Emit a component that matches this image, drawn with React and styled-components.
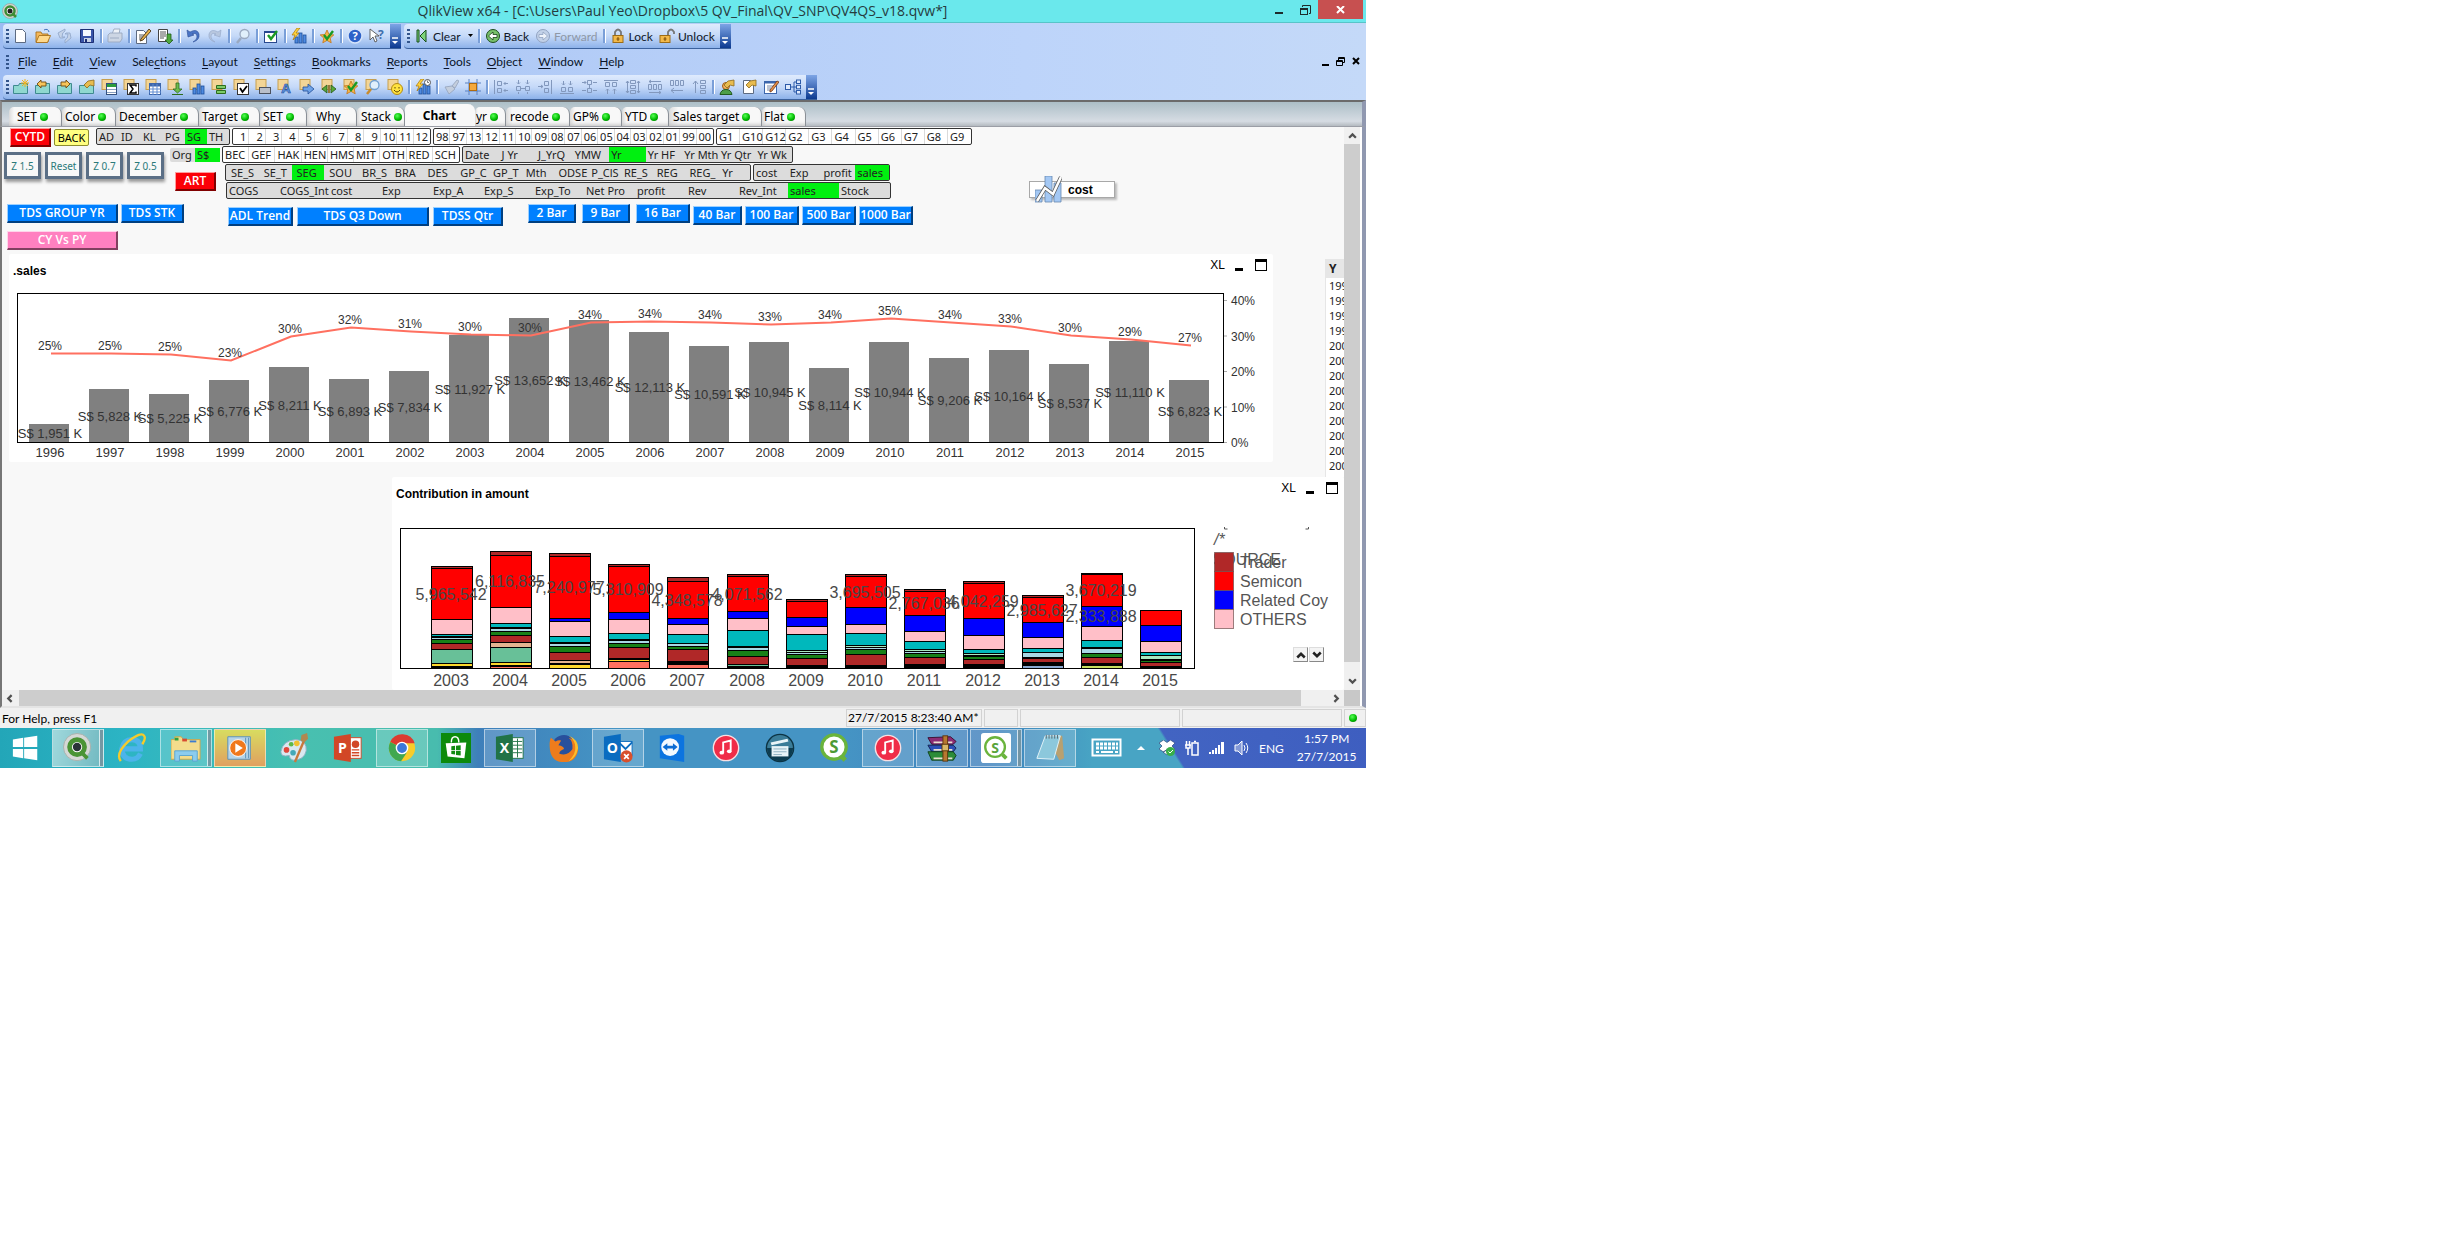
import React from "react";
import styled, { createGlobalStyle } from "styled-components";

const UI_FONT = `Lato, "Open Sans", sans-serif`;
const SHEET_FONT = `"Noto Sans", "DejaVu Sans", sans-serif`;
const CHART_FONT = `"Liberation Sans", Arial, sans-serif`;

const GlobalStyle = createGlobalStyle`
  * {
    box-sizing: border-box;
  }
  body {
    margin: 0;
    background: #fff;
    font-family: ${UI_FONT};
    font-size: 12px;
    color: #000;
  }
  button {
    font: inherit;
    color: inherit;
    padding: 0;
    border: 0;
    background: none;
  }
  svg {
    display: block;
    flex: none;
  }
`;

const Desktop = styled.div`
  width: 100%;
  max-width: 1366px;
  display: flex;
  flex-direction: column;
`;

/* ---------- window frame ---------- */

const TitleBar = styled.header`
  height: 23px;
  display: flex;
  align-items: stretch;
  background: #6ae8ec;
  border-bottom: 1px solid #58c4c8;
  padding-left: 2px;
`;

const TitleText = styled.h1`
  flex: 1;
  margin: 0;
  padding-left: 80px;
  font-family: "Open Sans", sans-serif;
  font-size: 14px;
  line-height: 22px;
  font-weight: 400;
  text-align: center;
  color: #263c3e;
  white-space: nowrap;
`;

const WindowButton = styled.button`
  width: ${(p) => (p.$close ? "45px" : "26px")};
  height: ${(p) => (p.$close ? "19px" : "22px")};
  margin-right: ${(p) => (p.$close ? "3px" : "0")};
  background: ${(p) => (p.$close ? "#c75050" : "transparent")};
  display: flex;
  align-items: center;
  justify-content: center;
`;

const ToolArea = styled.div`
  background: linear-gradient(90deg, #9dbcf2, #b4cdf7 45%, #bdd4fa 75%, #c4d9f8);
`;

const ToolRow = styled.div`
  display: flex;
  gap: 3px;
  height: 26px;
  padding: 1px 0 0 3px;
`;

const Toolbar = styled.div`
  display: flex;
  align-items: stretch;
  height: 25px;
  border-radius: 4px 0 0 4px;
  border-bottom: 1px solid #3b619c;
  background: linear-gradient(#dfebfd, #c5d9f8 50%, #8db2ea);
`;

const Grip = styled.span`
  width: 3px;
  height: 14px;
  align-self: center;
  margin: 0 1px 0 3px;
  background: repeating-linear-gradient(#33558c 0 2px, transparent 2px 4px);
`;

const ToolButton = styled.button`
  min-width: 22px;
  padding: 0 ${(p) => (p.$text ? "3px" : "0")};
  display: flex;
  align-items: center;
  justify-content: center;
  gap: 3px;
  color: ${(p) => (p.$off ? "#8f98a6" : "#101828")};
`;

const Divider = styled.span`
  width: 6px;
  padding: 5px 2px;

  &::before {
    content: "";
    display: block;
    width: 2px;
    height: 14px;
    background: #7a9fd8;
    border-right: 1px solid #fff;
  }
`;

const Overflow = styled.button`
  width: 11px;
  margin-left: 2px;
  background: linear-gradient(#7ea5e6, #0c3a90);
  display: flex;
  align-items: flex-end;
  justify-content: center;
  padding-bottom: 3px;
`;

const MenuBar = styled.nav`
  height: 25px;
  display: flex;
  align-items: center;
  gap: 8px;
  padding: 0 6px 0 3px;
`;

const MenuGroup = styled.div`
  flex: 1;
  display: flex;
  gap: 16px;
`;

const MenuLink = styled.a`
  color: #0a1428;
  text-decoration: none;

  u {
    text-underline-offset: 2px;
  }
`;

const ChildControls = styled.span`
  display: flex;
  gap: 7px;
`;

/* ---------- sheet tabs ---------- */

const TabStrip = styled.div`
  display: flex;
  align-items: flex-end;
  height: 27px;
  border-top: 2px solid #6b6b6b;
  border-left: 2px solid #8a8a8a;
  border-bottom: 1px solid #9b9ea6;
  border-right: 4px solid #9098b0;
  padding-left: 7px;
  background: linear-gradient(#acbfc7, #d6dce3 80%, #b4bac0);
`;

const Tab = styled.button`
  width: ${(p) => p.$w}px;
  height: ${(p) => (p.$active ? "22px" : "19px")};
  padding-left: ${(p) => (p.$active ? "0" : p.$pad || 3) + "px"};
  display: flex;
  align-items: center;
  justify-content: ${(p) => (p.$active ? "center" : "flex-start")};
  gap: 3px;
  border-radius: 5px 7px 0 0;
  border-right: 1px solid ${(p) => (p.$active ? "#f8f8f8" : "#8a8f96")};
  background: ${(p) => (p.$active ? "#f8f8f8" : "linear-gradient(90deg, #dcdcdc, #f8f8f8 10%)")};
  box-shadow: ${(p) => (p.$active ? "none" : "inset 0 -4px 4px -3px #bbb")};
  font-family: ${SHEET_FONT};
  font-size: 12px;
  font-weight: ${(p) => (p.$active ? 700 : 400)};
  white-space: nowrap;
`;

const Dot = styled.span`
  width: 8px;
  height: 8px;
  border-radius: 50%;
  flex: none;
  background: radial-gradient(circle at 40% 35%, #5f5, #0b0 55%, #060);
`;

/* ---------- sheet ---------- */

const SheetFrame = styled.main`
  display: flex;
  border-left: 2px solid #777;
  border-right: 4px solid #9098b0;
`;

const Sheet = styled.div`
  flex: 1;
  min-width: 0;
  overflow: hidden;
  background: #f8f8f8;
  font-family: ${SHEET_FONT};
`;

const SelectorLine = styled.div`
  display: flex;
  align-items: flex-start;
  gap: 2px;
  height: 19px;
  padding: 1px 0 0 8px;
`;

const PushButton = styled.button`
  flex: none;
  width: ${(p) => p.$w}px;
  height: 19px;
  border-style: solid;
  border-width: 1px 2px 2px 1px;
  font-family: "Open Sans", sans-serif;
  font-weight: 600;
  font-size: 12px;
  line-height: 14px;
  color: #fff;
  white-space: nowrap;
  display: flex;
  align-items: center;
  justify-content: center;
  ${(p) =>
    ({
      blue: "background: #0080ff; border-color: #9cd0ff #003f80 #003f80 #9cd0ff;",
      red: "background: #fb0007; border-color: #ff9c9c #800000 #800000 #ff9c9c;",
      pink: "background: #ff80c0; border-color: #ffd4ea #80405f #80405f #ffd4ea;",
    })[p.$tone || "blue"]}
`;

const BackButton = styled.button`
  flex: none;
  width: 35px;
  height: 17px;
  margin: 1px 5px 0 1px;
  font-size: 11px;
  line-height: 15px;
  background: #ffff80;
  border: 1px solid #8c8c30;
  border-radius: 2px;
`;

const ListBox = styled.div`
  flex: none;
  display: grid;
  grid-template-columns: repeat(${(p) => p.$cols}, 1fr);
  width: ${(p) => p.$w}px;
  height: ${(p) => (p.$plain ? "14px" : "17px")};
  background: ${(p) => (p.$gray ? "#dcdcdc" : "#fff")};
  border: ${(p) => (p.$plain ? "0" : "1px solid #333")};
  border-radius: 2px;
`;

const Cell = styled.button`
  min-width: 0;
  padding: 0 ${(p) => (p.$right ? "2px" : "0")} 0 ${(p) => p.$pad || 2}px;
  text-align: ${(p) => (p.$right ? "right" : "left")};
  font-size: 11px;
  line-height: 14px;
  white-space: nowrap;
  color: #222;
  background: ${(p) => (p.$on ? "#00f010" : "transparent")};
  border-right: ${(p) => (p.$rule ? "1px solid #dadada" : "0")};

  &:last-child {
    border-right: 0;
  }
`;

const SelectorBlock = styled.div`
  display: flex;
  align-items: flex-start;
`;

const ZoomGroup = styled.div`
  display: flex;
  gap: 4px;
  padding: 6px 0 0 2px;
`;

const ZoomButton = styled.button`
  width: 37px;
  height: 27px;
  border: 3px solid #5b6f86;
  background: #f8f8f8;
  box-shadow: 1px 3px 3px #999;
  font-size: 10px;
  color: #2b7a7a;
  white-space: nowrap;
`;

const OrgColumn = styled.div`
  display: flex;
  flex-direction: column;
  gap: 10px;
  width: 58px;
  padding: 2px 0 0 6px;

  ${PushButton} {
    margin-left: 5px;
  }
`;

const ListStack = styled.div`
  display: flex;
  flex-direction: column;
  gap: 1px;
  width: 669px;
`;

const ListRow = styled.div`
  display: flex;
  gap: 2px;
  padding-left: ${(p) => p.$indent || 0}px;
`;

const MinimizedChart = styled.button`
  margin: 35px 0 0 138px;
  width: 86px;
  height: 17px;
  display: flex;
  align-items: center;
  gap: 6px;
  padding-left: 5px;
  background: #fff;
  border: 1px solid #a8a8a8;
  box-shadow: 2px 2px 2px #bbb;
  font-family: ${CHART_FONT};
  font-weight: 700;
`;

const ButtonLine = styled.div`
  display: flex;
  align-items: flex-start;
  height: 27px;
  margin-top: 5px;
  padding-left: 5px;
`;

const ButtonGroup = styled.div`
  display: flex;
  gap: ${(p) => p.$gap || 4}px;
  margin: ${(p) => p.$drop || 0}px 0 0 ${(p) => p.$indent || 0}px;
`;

const ButtonTail = styled.div`
  padding: 0 0 4px 5px;
`;

const ChartLine = styled.div`
  display: flex;
  align-items: flex-start;
  height: 223px;
  padding-left: 7px;
`;

const ChartPanel = styled.section`
  flex: 0 1 1264px;
  min-width: 0;
  overflow: hidden;
  background: #fff;
  border-radius: 2px;
`;

const LowerPanel = styled(ChartPanel)`
  margin-left: 390px;
`;

const Caption = styled.div`
  display: flex;
  align-items: flex-start;
  height: 30px;
  padding: 5px 6px 0 4px;
`;

const CaptionTitle = styled.h2`
  flex: 1;
  margin: 5px 0 0;
  font-family: ${CHART_FONT};
  font-size: 12px;
  line-height: 14px;
`;

const CaptionIcons = styled.div`
  display: flex;
  align-items: center;
  gap: 10px;

  button {
    font-family: ${CHART_FONT};
    font-size: 12px;
    line-height: 12px;
  }
`;

const YearTable = styled.table`
  flex: none;
  width: 60px;
  border-collapse: collapse;
  margin: 5px 0 0;
  background: #fff;
  font-size: 11px;
  color: #222;
  border-left: 1px solid #e6e6e6;

  th {
    height: 19px;
    padding: 0 0 0 3px;
    text-align: left;
    font-size: 12px;
    line-height: 16px;
    background: #e6e6e6;
  }

  td {
    height: 15px;
    line-height: 13px;
    padding: 0 0 0 3px;
  }
`;

const TableClip = styled.div`
  margin-left: auto;
  width: 19px;
  height: 223px;
  overflow: hidden;
`;

const ChartBody = styled.div`
  display: flex;
  height: 183px;
`;

const LegendScroll = styled.div`
  display: flex;
  gap: 1px;
  padding: 7px 0 0 89px;
`;

const ScrollKey = styled.button`
  width: 15px;
  height: 15px;
  display: flex;
  align-items: center;
  justify-content: center;
  background: #f4f4f4;
  border: 1px solid #ddd;
  border-right-color: #888;
  border-bottom-color: #888;
`;

/* ---------- scrollbars ---------- */

const VScroll = styled.div`
  width: 18px;
  flex: none;
  display: flex;
  flex-direction: column;
  background: #f0f0f0;
  border-right: 2px solid #fff;
`;

const HScroll = styled.div`
  display: flex;
  height: 18px;
  background: #f0f0f0;
  border-left: 2px solid #777;
  border-right: 4px solid #9098b0;
  border-bottom: 2px solid #e4e4e4;
`;

const Thumb = styled.div`
  flex: 1;
  background: #cdcdcd;
`;

const ArrowKey = styled.button`
  flex: none;
  width: ${(p) => p.$w || 16}px;
  height: ${(p) => p.$h || 16}px;
  padding: ${(p) => p.$inset || "0"};
  display: flex;
  align-items: center;
  justify-content: ${(p) => p.$side || "center"};
`;

const ScrollCorner = styled.span`
  width: 18px;
  background: #c8c8c8;
  border-right: 2px solid #fff;
`;

/* ---------- status bar and taskbar ---------- */

const StatusBar = styled.footer`
  display: flex;
  align-items: center;
  height: 20px;
  padding-left: 2px;
  background: #f0f0f0;
`;

const StatusCell = styled.span`
  width: ${(p) => p.$w}px;
  height: 18px;
  margin-left: 2px;
  padding-left: ${(p) => (p.$lamp ? 4 : 1)}px;
  line-height: 16px;
  border: 1px solid #d2d2d2;
  white-space: nowrap;
  display: flex;
  align-items: center;
`;

const StatusHelp = styled.span`
  flex: 1;
`;

const Taskbar = styled.div`
  display: flex;
  align-items: stretch;
  height: 40px;
  background:
    linear-gradient(58deg, transparent 85%, #4264c2 85.2%, #3e5ec0),
    linear-gradient(90deg, #23a6b8, #2cb4c4 9%, #48c0b0 22%, #48bcae 32%, #3e7fba 35%, #4594c4 45%, #4594c4 62%, #3f80bc 72%, #48a4c4 80%, #48a4c4);
`;

const TaskButton = styled.button`
  width: 52px;
  margin: 1px 1px;
  display: flex;
  align-items: center;
  justify-content: center;
  border: 1px solid ${(p) => (p.$open ? "rgba(255,255,255,.5)" : "transparent")};
  background: ${(p) =>
    p.$hot
      ? "linear-gradient(#d8dc60, #e0a060)"
      : p.$front
        ? "linear-gradient(100deg, #a0d8dc, #70b8c0)"
        : p.$open
          ? "rgba(255,255,255,.18)"
          : "transparent"};
  box-shadow: ${(p) => (p.$stack ? "inset -4px 0 0 -1px rgba(20,70,90,.5), inset -5px 0 0 -1px rgba(255,255,255,.7)" : "none")};

  &:first-child {
    width: 49px;
  }
`;

const Tray = styled.div`
  flex: 1;
  display: flex;
  align-items: center;
  gap: 9px;
  padding-left: 14px;
  color: #fff;
`;

const Clock = styled.time`
  font-size: 12px;
  line-height: 18px;
  text-align: center;
  margin-left: 4px;
`;

/* ---------- small icons ---------- */

const Tile = () => <rect x="1" y="0.5" width="10" height="10" fill="#f3d596" stroke="#c79f4e" />;
const Page = ({ x = 2.5, y = 1.5 }) => (
  <path d={`M${x} ${y}h7l3 3v10h-10z`} fill="#fff" stroke="#5d6b82" />
);
const Folder = () => (
  <path d="M.5 6.5h5l1-2h8v10H.5z" fill="#8fd8cf" stroke="#3f8a90" />
);
const Bars = () => (
  <g fill="#4f8be0" stroke="#1c4f9c" strokeWidth=".8">
    <rect x="4" y="9" width="3" height="6" />
    <rect x="8" y="5" width="3" height="10" />
    <rect x="12" y="7" width="3" height="8" />
  </g>
);
const Star = () => (
  <path d="M8 2l2 4.4 4.8.5-3.6 3.2 1 4.7L8 12.4l-4.2 2.4 1-4.7L1.200 6.900 6 6.400z" fill="#f7b648" stroke="#c3731a" strokeWidth=".8" />
);
const Hand = () => <path d="M5 6l4-4 6-1v6l-4-1-3 3z" fill="#e8bc50" stroke="#8d6a1c" strokeWidth=".8" />;
const Glass = ({ color = "#6f9fd0" }) => (
  <g>
    <path d="M6 10l-4 5" stroke={color === "#6f9fd0" ? "#c98b2c" : color} strokeWidth="2.500" />
    <circle cx="9.500" cy="6" r="4.500" fill="#e0effb" stroke={color} strokeWidth="1.300" />
  </g>
);
const Bolt = () => <path d="M6 0L1 7h3l-2 5 6-7H5l4-5z" fill="#ffd23e" stroke="#a87608" strokeWidth=".7" />;
const Tick = ({ color = "#1c9a24" }) => <path d="M5 7l3 4 6-8" fill="none" stroke={color} strokeWidth="2.400" />;

const GLYPHS = {
  new: <Page />,
  open: (
    <g stroke="#a8701c" strokeWidth=".9">
      <path d="M1 14V4h5l1 2h6v8z" fill="#f5b85a" />
      <path d="M1 14.500l3-7h11.500l-3 7z" fill="#ffd98c" />
      <path d="M9 2q4-2 5 2" fill="none" stroke="#2c62b4" />
    </g>
  ),
  refresh: (
    <g fill="#c5d3e8" stroke="#8ea5c8" strokeWidth=".8">
      <path d="M8 9H5q0-5 3-6V1L1 5l2 5h3z" />
      <path d="M8 6h3q0 5-3 6v3l6-5-1-5H9z" />
    </g>
  ),
  save: (
    <g>
      <path d="M1.500 1.500h13v13h-13z" fill="#3a55a8" stroke="#1d2f74" />
      <rect x="4" y="2" width="8" height="6" fill="#f5f8ff" />
      <rect x="5" y="10" width="7" height="4" fill="#c9d3e6" />
      <rect x="6" y="11" width="2" height="3" fill="#1d2f74" />
    </g>
  ),
  print: (
    <g fill="#cdd6e4" stroke="#9aa8bf" strokeWidth=".9">
      <path d="M5 6l2-5h6l-1 5z" fill="#eef2f8" />
      <path d="M1 7l2-2h12v6l-2 3H1z" />
      <path d="M3 10h9" />
    </g>
  ),
  editScript: (
    <g>
      <Page y={2.5} x={1.5} />
      <path d="M4 7h5M4 9h4M4 11h5" stroke="#555" />
      <path d="M6 11L14 1l2 2-8 9-3 1z" fill="#e8b24a" stroke="#4a3414" strokeWidth=".9" />
    </g>
  ),
  reload: (
    <g>
      <path d="M1.500 1.500h9v12h-9z" fill="#fff" stroke="#444" />
      <path d="M3 4h6M3 6h6M3 8h6M3 10h4" stroke="#555" />
      <path d="M10 6h4v6h2l-4 4-4-4h2z" fill="#4fa83c" stroke="#1f5c18" strokeWidth=".8" />
    </g>
  ),
  undo: <path d="M2 2l1 7 6-2-2-1q5-2 5 3 0 3-4 5 7-2 6-8-2-6-9-2z" fill="#4a74c4" stroke="#2c4e96" strokeWidth=".6" />,
  redo: <path d="M14 2l-1 7-6-2 2-1Q4 4 4 9q0 3 4 5Q1 12 2 6q2-6 9-2z" fill="#b7c6de" stroke="#93a6c8" strokeWidth=".6" />,
  search: <Glass color="#9aa9c0" />,
  selections: (
    <g>
      <rect x="1.500" y="3.500" width="12" height="11" fill="#fff" stroke="#27488e" />
      <path d="M1 4h13" stroke="#27488e" strokeWidth="2" />
      <Tick />
    </g>
  ),
  quickChart: (
    <g>
      <Bars />
      <Bolt />
    </g>
  ),
  bookmark: (
    <g>
      <Star />
      <Tick />
    </g>
  ),
  help: (
    <g>
      <circle cx="8" cy="8" r="7" fill="#2e62c8" stroke="#d5e3fa" strokeWidth="1.500" />
      <text x="8" y="12" textAnchor="middle" fontSize="11" fontWeight="700" fill="#fff">?</text>
    </g>
  ),
  context: (
    <g>
      <path d="M1 1v11l3-3 2 5 2-1-2-5h4z" fill="#fff" stroke="#555" strokeWidth=".9" />
      <text x="9" y="11" fontSize="12" fontWeight="700" fill="#3f6fae">?</text>
    </g>
  ),
  clear: (
    <g fill="#7ed47a" stroke="#174f1a">
      <path d="M3 2h2v12H3zM12 2v12L6 8z" />
    </g>
  ),
  back: (
    <g>
      <circle cx="8" cy="8" r="6.500" fill="#78c06a" stroke="#1c4d1c" />
      <path d="M3.500 8L8 4v2.500h4v3H8V12z" fill="#fff" stroke="#173f17" strokeWidth=".8" />
    </g>
  ),
  forward: (
    <g>
      <circle cx="8" cy="8" r="6.500" fill="#c2d1e8" stroke="#90a2c0" />
      <path d="M12.500 8L8 4v2.500H4v3h4V12z" fill="#eef3fb" stroke="#90a2c0" strokeWidth=".8" />
    </g>
  ),
  lock: (
    <g>
      <path d="M5 8V4q3-5 6 0v4" fill="none" stroke="#777" strokeWidth="1.800" />
      <rect x="3" y="7.500" width="10" height="7" fill="#f2b94a" stroke="#9c6c16" />
      <path d="M8 9v4M6.500 11h3" stroke="#7a4c08" />
    </g>
  ),
  unlock: (
    <g>
      <path d="M9 8V4q3-5 6 0v2" fill="none" stroke="#777" strokeWidth="1.800" />
      <rect x="1" y="7.500" width="10" height="7" fill="#f2b94a" stroke="#9c6c16" />
      <path d="M6 9v4M4.500 11h3" stroke="#7a4c08" />
    </g>
  ),
  addSheet: (
    <g>
      <Folder />
      <path d="M12 0v8M8 4h8M9 1l6 6M15 1L9 7" stroke="#f2b21c" />
    </g>
  ),
  promote: (
    <g>
      <Folder />
      <path d="M2 5l4-4v2h5v4H6v2z" fill="#f7c45a" stroke="#6d4b10" strokeWidth=".9" />
    </g>
  ),
  demote: (
    <g>
      <Folder />
      <path d="M13 5L9 1v2H4v4h5v2z" fill="#f7c45a" stroke="#6d4b10" strokeWidth=".9" />
    </g>
  ),
  sheetProps: (
    <g>
      <Folder />
      <Hand />
    </g>
  ),
  listBox: (
    <g>
      <Tile />
      <rect x="5.500" y="4.500" width="10" height="11" fill="#fff" stroke="#33507e" />
      <rect x="6" y="5" width="9" height="3" fill="#2c9c3c" />
      <path d="M6 10.500h9M6 13.500h9" stroke="#8aa0c0" />
    </g>
  ),
  stats: (
    <g>
      <Tile />
      <rect x="4.500" y="4.500" width="11" height="11" fill="#fff" stroke="#333" />
      <path d="M13 7.500V6H7l3 4-3 4h6v-1.500" fill="none" stroke="#000" strokeWidth="1.500" />
    </g>
  ),
  table: (
    <g>
      <Tile />
      <rect x="4.500" y="4.500" width="11" height="11" fill="#fff" stroke="#3c66ac" />
      <path d="M4 6h12" stroke="#3c66ac" strokeWidth="3" />
      <path d="M4 10h12M4 13h12M8 5v11M12 5v11" stroke="#5f8bd0" />
    </g>
  ),
  input: (
    <g>
      <Tile />
      <path d="M9 4h3v6h3l-4.500 4L6 10h3z" fill="#6dbb4e" stroke="#2c6c1c" strokeWidth=".8" />
      <path d="M5 15.500h11" stroke="#2c6c1c" />
    </g>
  ),
  chart: (
    <g>
      <Tile />
      <Bars />
    </g>
  ),
  multiBox: (
    <g>
      <Tile />
      <path d="M5.500 6.500h9v3h-9zM5.500 11.500h9v3h-9z" fill="#7ccb68" stroke="#2c6c1c" />
    </g>
  ),
  current: (
    <g>
      <Tile />
      <rect x="4.500" y="4.500" width="11" height="11" fill="#fff" stroke="#333" />
      <path d="M7 9l2.500 4L14 7" fill="none" stroke="#000" strokeWidth="1.800" />
    </g>
  ),
  button: (
    <g>
      <Tile />
      <rect x="4.500" y="8.500" width="11" height="6" fill="#b9bfca" stroke="#4c525e" />
    </g>
  ),
  text: (
    <g>
      <Tile />
      <text x="9" y="14" textAnchor="middle" fontSize="13" fontWeight="700" fill="#5e92dc" stroke="#1f4c98" strokeWidth=".6">A</text>
    </g>
  ),
  line: (
    <g>
      <Tile />
      <path d="M4 8h5V5l6 5-6 5v-3H4z" fill="#6fa2e6" stroke="#1f4c98" strokeWidth=".8" />
    </g>
  ),
  slider: (
    <g>
      <Tile />
      <path d="M1 10l5-4v8zM15 10l-5-4v8z" fill="#58a838" stroke="#24561a" strokeWidth=".8" />
      <rect x="7" y="6" width="2" height="8" fill="#98783c" />
    </g>
  ),
  bookmarkObj: (
    <g>
      <Tile />
      <Star />
      <Tick />
    </g>
  ),
  searchObj: (
    <g>
      <Tile />
      <Glass />
    </g>
  ),
  custom: (
    <g>
      <Tile />
      <circle cx="10" cy="10" r="5.500" fill="#ffe23e" stroke="#b48a12" />
      <path d="M8 8v1.500M12 8v1.500M7 11q3 4 6 0" fill="none" stroke="#5a4200" />
    </g>
  ),
  timeChart: (
    <g>
      <Bars />
      <Bolt />
      <circle cx="12.500" cy="3.500" r="3" fill="#fff" stroke="#555" />
      <path d="M12.500 1.500v2h1.500" fill="none" stroke="#555" strokeWidth=".8" />
    </g>
  ),
  brush: (
    <g fill="#c4cedd" stroke="#98a7bf" strokeWidth=".9">
      <path d="M9 7l5-6 2 1-4 7z" />
      <path d="M2 8l7-1 3 3-6 5z" />
    </g>
  ),
  grid: (
    <g>
      <path d="M4 0v16M12 0v16M0 4h16M0 12h16" stroke="#5a82c4" />
      <rect x="4.500" y="4.500" width="7" height="7" fill="#f5a93c" stroke="#b06c10" />
    </g>
  ),
  alignL: <path d="M1.500 1v14M4.500 2.500h4v4h-4zM4.500 9.500h4v4h-4zM15 4.500h-4m1.500-1.500L11 4.500 12.500 6M15 11.500h-4m1.500-1.500L11 11.500l1.500 1.500" />,
  alignC: <path d="M1.500 7.500h4v4h-4zM10.500 7.500h4v4h-4zM6 9.500h4M3.500 1v4m-1.500-1.500L3.500 5 5 3.500M12.500 1v4M11 3.500L12.500 5 14 3.500M3.500 15v-2M12.500 15v-2" />,
  alignR: <path d="M14.500 1v14M7.500 2.500h4v4h-4zM7.500 9.500h4v4h-4zM1 7.500h5M4 6l2 1.500L4 9" />,
  alignB: <path d="M1 14.500h14M2.500 8.500h4v4h-4zM9.500 8.500h4v4h-4zM4.500 2v4M3 4.500L4.500 6 6 4.500M11.500 2v4M10 4.500L11.500 6 13 4.500" />,
  alignM: <path d="M6.500 1.500h4v4h-4zM6.500 9.500h4v4h-4zM1 3.500h4M3.500 2L5 3.500 3.500 5M16 3.500h-4M1 11.500h4M16 11.500h-4M8.500 6v3" />,
  alignT: <path d="M1 1.500h14M2.500 3.500h4v4h-4zM9.500 3.500h4v4h-4zM4.500 15v-5M3 11.500L4.500 10 6 11.500M11.500 15v-5M10 11.500l1.500-1.500 1.500 1.500" />,
  spaceV: <path d="M5.500 1.500h5v3h-5zM5.500 6.500h5v3h-5zM5.500 11.500h5v3h-5zM2.500 2v12M1 4l1.500-2L4 4M1 12l1.500 2L4 12M13.500 2v12M12 4l1.500-2L15 4M12 12l1.500 2 1.500-2" />,
  spaceH: <path d="M1.500 5.500h3v5h-3zM6.500 5.500h3v5h-3zM11.500 5.500h3v5h-3zM2 2.500h12M2 13.500h12M4 1L2 2.500 4 4M12 12l2 1.500-2 1.500" />,
  spreadL: <path d="M1.500 1.500h3v5h-3zM6.500 1.500h3v5h-3zM11.500 1.500h3v5h-3zM14 11.500H2M5 9l-3 2.500L5 14" />,
  spreadT: <path d="M9.500 1.500h5v3h-5zM9.500 6.500h5v3h-5zM9.500 11.500h5v3h-5zM4.500 14V2M2 5l2.500-3L7 5" />,
  userProps: (
    <g>
      <circle cx="7" cy="7" r="3.500" fill="#f3b05c" stroke="#9c5c14" />
      <path d="M1 15.500q1-5 6-5t6 5z" fill="#4d9f48" stroke="#235a20" />
      <Hand />
    </g>
  ),
  docProps: (
    <g>
      <Page />
      <Hand />
    </g>
  ),
  notes: (
    <g>
      <rect x="1.500" y="2.500" width="12" height="12" fill="#fff" stroke="#3c66ac" />
      <path d="M1 3.500h13" stroke="#3c66ac" strokeWidth="2" />
      <path d="M4 7h6M4 9h4M4 11h5" stroke="#7a8aa8" />
      <path d="M7 11l7-9 2 1-7 9-2 1z" fill="#e8924a" stroke="#6c3414" strokeWidth=".8" />
    </g>
  ),
  structure: (
    <g fill="#dfeafc" stroke="#2c5aa8">
      <path d="M6 8h3M9 3v10M9 3h2M9 13h2M9 8h2" />
      <rect x=".500" y="5.500" width="5" height="5" />
      <rect x="11.500" y="1" width="4" height="3.500" />
      <rect x="11.500" y="6.300" width="4" height="3.500" />
      <rect x="11.500" y="11.500" width="4" height="3.500" />
    </g>
  ),
};

const Icon = ({ name }) => {
  const outline = /^(align|space|spread)/.test(name);
  return (
    <svg
      width="16"
      height="16"
      viewBox="0 0 16 16"
      fontFamily="Open Sans"
      fill={outline ? "none" : undefined}
      stroke={outline ? "#8298bd" : undefined}
    >
      {GLYPHS[name]}
    </svg>
  );
};

const Chevron = ({ dir = "down", size = 9, color = "#505050" }) => (
  <svg width={size} height={size} viewBox="0 0 8 8">
    <path
      d={{ up: "M1 6l3-3 3 3", down: "M1 2l3 3 3-3", left: "M5 1L2 4l3 3", right: "M3 1l3 3-3 3" }[dir]}
      fill="none"
      stroke={color}
      strokeWidth="2"
    />
  </svg>
);

const OverflowArrow = () => (
  <svg width="7" height="8" viewBox="0 0 7 8">
    <path d="M0 1h6" stroke="#fff" strokeWidth="1.500" />
    <path d="M0 4h6l-3 3z" fill="#fff" />
  </svg>
);

const ItemStrip = ({ items }) =>
  items.map((name, i) =>
    name === "|" ? (
      <Divider key={i} />
    ) : (
      <ToolButton key={i} type="button" aria-label={name}>
        <Icon name={name} />
      </ToolButton>
    )
  );

const STANDARD = "new open refresh save | print | editScript reload | undo redo | search | selections | quickChart | bookmark | help context".split(" ");
const DESIGN = "addSheet promote demote sheetProps listBox stats table input chart multiBox current button text line slider bookmarkObj searchObj custom | timeChart | brush grid | alignL alignC alignR alignB alignM alignT spaceV spaceH spreadL spreadT | userProps docProps notes structure".split(" ");

const MENUS = ["_File", "_Edit", "_View", "Sele_ctions", "_Layout", "_Settings", "_Bookmarks", "_Reports", "_Tools", "_Object", "_Window", "_Help"];

const MenuItem = ({ label }) => {
  const [head, tail] = label.split("_");
  return (
    <MenuLink href="#">
      {head}
      <u>{tail[0]}</u>
      {tail.slice(1)}
    </MenuLink>
  );
};

const TABS = [
  { label: "SET", w: 53, pad: 8 },
  { label: "Color", w: 54 },
  { label: "December", w: 83 },
  { label: "Target", w: 61 },
  { label: "SET", w: 47 },
  { label: "Why", w: 50, pad: 9, plain: true },
  { label: "Stack", w: 48, pad: 4 },
  { label: "Chart", w: 70, active: true },
  { label: "yr", w: 31, pad: 1 },
  { label: "recode", w: 64, pad: 4 },
  { label: "GP%", w: 52 },
  { label: "YTD", w: 47 },
  { label: "Sales target", w: 93, pad: 4 },
  { label: "Flat", w: 44, pad: 2 },
];

const SelectList = ({ items, w, on, gray, plain, right, rule, pad }) => (
  <ListBox $cols={items.length} $w={w} $gray={gray} $plain={plain}>
    {items.map((item) => (
      <Cell key={item} type="button" $on={item === on} $right={right} $rule={rule} $pad={pad}>
        {item}
      </Cell>
    ))}
  </ListBox>
);

/* ---------- charts ---------- */

// amount in thousands, top of the bar, share of the total, height of the line
const SALES = [
  [1996, "1,951", 424, 25, 353],
  [1997, "5,828", 389, 25, 353],
  [1998, "5,225", 394, 25, 354],
  [1999, "6,776", 380, 23, 360],
  [2000, "8,211", 367, 30, 336],
  [2001, "6,893", 379, 32, 327],
  [2002, "7,834", 371, 31, 331],
  [2003, "11,927", 335, 30, 334],
  [2004, "13,652", 318, 30, 335],
  [2005, "13,462", 320, 34, 322],
  [2006, "12,113", 332, 34, 321],
  [2007, "10,591", 346, 34, 322],
  [2008, "10,945", 342, 33, 324],
  [2009, "8,114", 368, 34, 322],
  [2010, "10,944", 342, 35, 318],
  [2011, "9,206", 358, 34, 322],
  [2012, "10,164", 350, 33, 326],
  [2013, "8,537", 364, 30, 335],
  [2014, "11,110", 341, 29, 339],
  [2015, "6,823", 380, 27, 345],
];

const SalesChart = () => (
  <svg width="1264" height="178" viewBox="9 284 1264 178" fontFamily="Liberation Sans, Arial" fill="#333">
    {SALES.map(([year, , top], i) => (
      <rect key={year} x={29 + i * 60} y={top} width="40" height={442 - top} fill="#808080" />
    ))}
    <rect x="17.500" y="293.500" width="1206" height="149" fill="none" stroke="#000" />
    <polyline
      points={SALES.map((d, i) => `${51 + i * 60},${d[4] + 0.5}`).join(" ")}
      fill="none"
      stroke="#ff7060"
      strokeWidth="2"
    />
    {SALES.map(([year, amount, top, share, y], i) => (
      <g key={year} textAnchor="middle">
        <text x={50 + i * 60} y={y - 3} fontSize="12">{share}%</text>
        <text x={50 + i * 60} y={Math.round((top + 442) / 2) + 5} fontSize="13">{`S$ ${amount} K`}</text>
        <text x={50 + i * 60} y="457" fontSize="13">{year}</text>
      </g>
    ))}
    {[40, 30, 20, 10, 0].map((tick, i) => (
      <g key={tick}>
        <path d={`M1224 ${300.5 + i * 35.5}h3`} stroke="#aaa" />
        <text x="1231" y={305 + Math.round(i * 35.5)} fontSize="12">{tick}%</text>
      </g>
    ))}
  </svg>
);

const COLORS = {
  W: "#b02828", R: "#ff0000", B: "#0000ff", P: "#ffbfc8", T: "#00b8bc", L: "#a8d8e4", G: "#188018",
  M: "#68c098", Y: "#ffd82c", S: "#ff7060", N: "#e4b490", A: "#a8e8c0", C: "#88a8d0", E: "#c8e060", K: "#000",
};

// colour key and start of every slice, from the top down to 668
const STACKS = [
  [2003, "W566 R568 P619 T634 K636 L637 G639 W643 M649 Y663 K666", { R: "5,965,542" }],
  [2004, "W551 R555 P607 T623 K627 L628 G631 W635 N642 M647 Y662 K665 S666", { R: "6,116,835" }],
  [2005, "W553 R556 B618 P621 T636 K642 L643 G646 W652 N660 K663 Y664", { R: "7,240,977" }],
  [2006, "W564 R566 B612 P619 T633 K639 L640 G643 W647 K658 Y659 S661", { R: "5,310,909" }],
  [2007, "W577 R581 B618 P624 T634 L643 G646 W649 K661 S664", { R: "4,348,578" }],
  [2008, "W574 R576 B611 P618 T630 K646 L647 G650 W656 M664 K666", { R: "4,071,562" }],
  [2009, "W599 R601 B617 P626 T634 A650 L652 G654 W658 K665", {}],
  [2010, "W574 R576 B607 P624 T633 A645 L647 G649 W654 K665", { R: "3,695,505" }],
  [2011, "W589 R591 B615 P631 T641 A649 L651 G653 W657 K664", { R: "2,767,036" }],
  [2012, "W581 R583 B618 P635 T649 A653 K655 G656 W659 K664", { R: "4,042,259" }],
  [2013, "W595 R597 B622 P637 T648 L652 K657 W658 K662 C665", { R: "2,985,627" }],
  [2014, "K573 R574 B606 P626 T640 K647 L648 G653 W657 K663 E665", { R: "3,670,219", B: "2,333,888" }],
  [2015, "R610 B625 P641 T652 A655 K659 G660 W662 K666", {}],
].map(([year, code, labels], i) => {
  const parts = code.split(" ");
  return {
    year,
    x: 431 + Math.round(i * 59.1),
    slices: parts.map((part, n) => {
      const y = Number(part.slice(1));
      const next = n + 1 < parts.length ? Number(parts[n + 1].slice(1)) : 668;
      return { key: part, fill: COLORS[part[0]], y, h: next - y, label: labels[part[0]] };
    }),
  };
});

const StackChart = () => (
  <svg width="812" height="183" viewBox="392 507 812 183" fontFamily="Liberation Sans, Arial" fontSize="16" fill="#484848">
    {STACKS.map((s) =>
      s.slices.map((p) => (
        <rect key={s.year + p.key} x={s.x + 0.5} y={p.y + 0.5} width="41" height={p.h} fill={p.fill} stroke="#000" />
      ))
    )}
    <rect x="400.500" y="528.500" width="794" height="140" fill="none" stroke="#000" />
    {STACKS.map((s) => (
      <g key={s.year} textAnchor="middle">
        {s.slices.filter((p) => p.label).map((p) => (
          <text key={p.key} x={s.x + 20} y={Math.round(p.y + p.h / 2) + 6}>{p.label}</text>
        ))}
        <text x={s.x + 20} y="686">{s.year}</text>
      </g>
    ))}
  </svg>
);

const LEGEND = [["W", "Trader"], ["R", "Semicon"], ["B", "Related Coy"], ["P", "OTHERS"]];

const Legend = () => (
  <svg width="139" height="133" viewBox="1204 507 139 133" fontFamily="Liberation Sans, Arial" fontSize="16" fill="#555">
    <path d="M1224.500 527v2h3M1308.500 527v2h-3" fill="none" stroke="#555" />
    <text x="1214" y="545" fontStyle="italic">/*</text>
    <text x="1281" y="565" textAnchor="end">SOURCE</text>
    {LEGEND.map(([key, label], i) => (
      <g key={key}>
        <rect x="1210" y={552 + i * 19} width="4" height="19" fill="#fff" />
        <rect x="1214.500" y={552.5 + i * 19} width="19" height="19" fill={COLORS[key]} stroke="#705050" strokeOpacity=".7" />
        <text x="1240" y={568 + i * 19}>{label}</text>
      </g>
    ))}
  </svg>
);

const PanelCaption = ({ title }) => (
  <Caption>
    <CaptionTitle>{title}</CaptionTitle>
    <CaptionIcons>
      <button type="button">XL</button>
      <button type="button" aria-label="Minimize">
        <svg width="8" height="12"><rect y="9" width="8" height="3" /></svg>
      </button>
      <button type="button" aria-label="Maximize">
        <svg width="14" height="12">
          <rect x="2.500" y=".500" width="11" height="11" fill="#fff" stroke="#000" />
          <rect x="2" width="12" height="3" />
        </svg>
      </button>
    </CaptionIcons>
  </Caption>
);

/* ---------- taskbar icons ---------- */

const Music = () => (
  <g>
    <circle cx="16" cy="16" r="13.500" fill="#f02c48" stroke="#f8dfe2" strokeWidth="1.500" />
    <path d="M13 21V10l8-2v11" fill="none" stroke="#fff" strokeWidth="2" />
    <ellipse cx="11.500" cy="21" rx="2.500" ry="2" fill="#fff" />
    <ellipse cx="19.500" cy="19.500" rx="2.500" ry="2" fill="#fff" />
  </g>
);

const OfficeBook = ({ color, letter }) => (
  <g>
    <path d="M1 4l18-3v30L1 28z" fill={color} />
    <text x="10" y="21" textAnchor="middle" fontSize="15" fontWeight="700" fill="#fff">{letter}</text>
  </g>
);

const SenseRing = () => (
  <g>
    <path d="M22 23l6 6" stroke="#6ab43c" strokeWidth="5" />
    <circle cx="16" cy="15" r="13" fill="#fff" stroke="#6ab43c" strokeWidth="3.500" />
    <text x="16" y="21" textAnchor="middle" fontSize="18" fontWeight="700" fill="#4d9a34">S</text>
  </g>
);

const TASKS = [
  { name: "Start", art: <path d="M2 7l11-2v10H2zM14 5l14-2v12H14zM2 17h11v10L2 25zM14 17h14v12l-14-2z" fill="#fff" /> },
  {
    name: "QlikView", front: true, open: true, stack: true,
    art: (
      <g>
        <circle cx="15" cy="15" r="14.500" fill="#d5d8d6" stroke="#a8b0ac" />
        <circle cx="15" cy="15" r="8" fill="#fff" stroke="#4a9436" strokeWidth="5" />
        <path d="M19 20l7 7" stroke="#4a9436" strokeWidth="4" />
        <circle cx="15" cy="15" r="4.500" fill="#2a3438" />
      </g>
    ),
  },
  {
    name: "Internet Explorer",
    art: (
      <g fill="none">
        <path d="M5 17h20q0-10-9-10T5 17q1 11 11 11 6 0 9-6" stroke="#4cb4ea" strokeWidth="5.500" />
        <path d="M4 30Q-2 22 12 9 26-2 29 3q2 3-2 9" stroke="#f5cb2c" strokeWidth="2.500" />
      </g>
    ),
  },
  {
    name: "File Explorer", open: true, stack: true,
    art: (
      <g>
        <path d="M0 28V7h4V4h7l2 3h18v21z" fill="#f3dc8c" stroke="#c8a850" />
        <path d="M4 5h4v3H4z" fill="#2ca040" /><path d="M12 6h5v3h-5z" fill="#d84a30" /><path d="M20 8h7v2h-7z" fill="#3c7cd0" />
        <path d="M4 30V19h24v11h-5v-6H9v6z" fill="#8cccee" stroke="#5aa4d0" />
      </g>
    ),
  },
  {
    name: "Media Player", hot: true, open: true,
    art: (
      <g>
        <path d="M3 4h24v24H3z" fill="#b6d4e8" stroke="#5a90b8" /><path d="M22 5v22M25 5v22" stroke="#5a90b8" />
        <circle cx="14" cy="16" r="9" fill="#f0781c" stroke="#fff" /><path d="M11 11v10l8-5z" fill="#fff" />
      </g>
    ),
  },
  {
    name: "Paint",
    art: (
      <g>
        <path d="M2 20Q4 8 18 7q12 1 11 12-2 10-14 10-4-1-4-5-9 2-9-4z" fill="#d9e8f0" stroke="#8fb0c4" />
        <circle cx="8" cy="18" r="3" fill="#e0483c" /><circle cx="13" cy="12" r="2.500" fill="#5cb848" /><circle cx="19" cy="11" r="3" fill="#f0c030" /><circle cx="15" cy="21" r="3" fill="#44a8b8" />
        <path d="M28 5L17 31" stroke="#c8783c" strokeWidth="2.500" /><path d="M24 2l6-2 1 6-4 4-4-2z" fill="#b08850" />
      </g>
    ),
  },
  {
    name: "PowerPoint",
    art: (
      <g>
        <rect x="18" y="5" width="12" height="22" fill="#fff" stroke="#d24726" />
        <path d="M20 18h8M20 21h8M20 24h8" stroke="#d24726" strokeWidth="1.500" /><circle cx="24" cy="12" r="4" fill="#d24726" />
        <OfficeBook color="#d24726" letter="P" />
      </g>
    ),
  },
  {
    name: "Chrome", open: true,
    art: (
      <g>
        <circle cx="16" cy="16" r="14" fill="#f8cc28" />
        <path d="M16 16L3.500 9.500A14 14 0 0 1 29.500 11H16z" fill="#dc3c30" /><path d="M16 16L3.500 9.500A14 14 0 0 0 15 30l6-9z" fill="#40a850" />
        <circle cx="16" cy="16" r="6" fill="#3c78d8" stroke="#fff" strokeWidth="1.500" />
      </g>
    ),
  },
  {
    name: "Store",
    art: (
      <g>
        <rect x="0" y="0" width="32" height="32" fill="#0c8a0c" />
        <path d="M5 11l22-1-2 17-18-2z" fill="#fff" /><path d="M11 10q0-6 4-6t4 6" fill="none" stroke="#fff" strokeWidth="1.500" />
        <path d="M11 14l4-.500v4.500h-4zM16 13.500l5-.500v5h-5zM11 19h4v4l-4-.500zM16 19h5v5l-5-.500z" fill="#108a10" />
      </g>
    ),
  },
  {
    name: "Excel", open: true,
    art: (
      <g>
        <rect x="18" y="5" width="12" height="22" fill="#fff" stroke="#217346" />
        <path d="M19 9h10M19 13h10M19 17h10M19 21h10M24 6v20" stroke="#217346" />
        <OfficeBook color="#217346" letter="X" />
      </g>
    ),
  },
  {
    name: "Firefox",
    art: (
      <g>
        <circle cx="16" cy="15" r="13" fill="#28509c" />
        <path d="M2 5l5 4q3-2 6-1l-3 5q6 1 6 4-5 2-5 5 9 3 14-5 1-8-4-12 10 3 10 13-2 13-15 13T1 18Q0 9 2 5z" fill="#ee7c1c" />
        <path d="M21 3q10 4 10 13-2 11-10 14 8-8 7-15 0-7-7-12z" fill="#fbc02c" />
      </g>
    ),
  },
  {
    name: "Outlook", open: true,
    art: (
      <g>
        <rect x="17" y="9" width="14" height="15" fill="#fff" stroke="#0a6cc0" /><path d="M18 11l6 6 7-7" fill="none" stroke="#0a6cc0" strokeWidth="2" />
        <OfficeBook color="#0a6cc0" letter="O" />
        <circle cx="25" cy="25" r="6.500" fill="#d8502c" /><path d="M22.500 22.500l5 5M27.500 22.500l-5 5" stroke="#fff" strokeWidth="1.800" />
      </g>
    ),
  },
  {
    name: "TeamViewer",
    art: (
      <g>
        <path d="M3 3l20-2 6 2v28l-5-1-21-3z" fill="#0c74e0" /><circle cx="14" cy="15" r="9.500" fill="#f4f9ff" />
        <path d="M6 15l5-4v2.500h6V11l5 4-5 4v-2.500h-6V19z" fill="#0c6cd4" />
      </g>
    ),
  },
  { name: "iTunes", art: <Music /> },
  {
    name: "Movie Maker",
    art: (
      <g>
        <circle cx="16" cy="16" r="14.500" fill="#3a7c98" stroke="#0c3444" strokeWidth="1.500" />
        <path d="M2 16h28q-1 13-14 14Q3 29 2 16z" fill="#0c3c50" />
        <path d="M7 14h18v11H7z" fill="#e8f4f8" /><path d="M6 10l18-4 1 3-18 4z" fill="#e8f4f8" /><path d="M9 17h14M9 20h14M9 23h9" stroke="#8cb0c0" />
      </g>
    ),
  },
  { name: "Qlik Sense", art: <SenseRing /> },
  { name: "iTunes library", open: true, art: <Music /> },
  {
    name: "WinRAR", open: true,
    art: (
      <g>
        <path d="M1 5l24-1 6 5-3 3H5z" fill="#8c2c74" stroke="#3c1030" /><path d="M1 13h27l3 3-3 4H5z" fill="#2c50b8" stroke="#102050" /><path d="M1 20h27l3 4-3 5H5z" fill="#2c8c38" stroke="#10401c" />
        <path d="M7 10h20M7 18h20M7 27h20" stroke="#e8e0d0" strokeWidth="2" />
        <rect x="17" y="3" width="5" height="27" fill="#b87830" stroke="#5c3810" /><rect x="16" y="12" width="7" height="7" fill="#d8b868" stroke="#5c3810" />
      </g>
    ),
  },
  {
    name: "Sense Desktop", open: true, stack: true,
    art: (
      <g>
        <rect width="32" height="32" rx="3" fill="#fff" />
        <circle cx="15" cy="15" r="10.500" fill="none" stroke="#6ab43c" strokeWidth="2.500" /><path d="M23 23l4 4" stroke="#6ab43c" strokeWidth="4" />
        <text x="15" y="21" textAnchor="middle" fontSize="15" fontWeight="700" fill="#5aa43c">S</text>
      </g>
    ),
  },
  {
    name: "Notepad", open: true,
    art: (
      <g>
        <path d="M12 3h17l2 24-5 2z" fill="#b8a070" /><path d="M11 3h16l-7 25-18-1z" fill="#8cc8dc" stroke="#e4f4fa" />
        <path d="M12 2v4M15 2v4M18 2v4M21 2v4M24 2v4" stroke="#5a6870" />
      </g>
    ),
  },
];

const TrayIcons = () => (
  <>
    <svg width="32" height="20" viewBox="0 0 32 20" aria-label="Keyboard">
      <rect x="1.500" y="1.500" width="28" height="16" fill="none" stroke="#fff" strokeWidth="2" />
      <path d="M5 6h22M5 10h22" stroke="#fff" strokeWidth="3" strokeDasharray="3 1" />
      <path d="M5 14h3M10 14h12M24 14h3" stroke="#fff" strokeWidth="2" />
    </svg>
    <svg width="18" height="8" viewBox="0 0 18 8"><path d="M5 6l4-4 4 4z" fill="#fff" /></svg>
    <svg width="16" height="16" viewBox="0 0 16 16">
      <path d="M4.500 0L8 2.500 11.500 0 16 3l-3 3 3 3-4.500 3L8 9.500 4.500 12 0 9l3-3-3-3zM4 12l4-2 4 2-4 3z" fill="#fff" stroke="#28487c" strokeWidth=".7" />
      <circle cx="11.500" cy="11.500" r="4.500" fill="#38b048" />
      <path d="M9.500 11.500l1.500 1.500 3-3" fill="none" stroke="#fff" />
    </svg>
    <svg width="16" height="16" viewBox="0 0 16 16" fill="none" stroke="#fff" strokeWidth="1.500">
      <rect x="8" y="3" width="6" height="12" /><path d="M10 1.500h2M1 5h6M2 5v3h4V5M2.500 1v4M5.500 1v4M4 8v7" />
    </svg>
    <svg width="16" height="14" viewBox="0 0 16 14" fill="#fff">
      <path d="M0 11h2v2H0zM3 9h2v4H3zM6 7h2v6H6zM9 4h2v9H9zM12 1h3v12h-3z" />
    </svg>
    <svg width="16" height="16" viewBox="0 0 16 16" fill="none" stroke="#fff">
      <path d="M1 5h3l4-4v14l-4-4H1z" fill="#fff" fillOpacity=".35" /><path d="M10 5q2 3 0 6M12 3q3.500 5 0 10" />
    </svg>
  </>
);

export default function App() {
  return (
    <>
      <GlobalStyle />
      <Desktop>
        <TitleBar>
          <svg width="17" height="22" viewBox="0 0 17 22">
            <circle cx="8" cy="11" r="7.500" fill="#d0d4d0" stroke="#98a098" strokeWidth=".7" />
            <circle cx="8" cy="11" r="4.500" fill="#fff" stroke="#3f8c34" strokeWidth="2.500" />
            <path d="M10 13l4 4" stroke="#3f8c34" strokeWidth="2.500" />
            <circle cx="8" cy="11" r="2.500" fill="#222" />
          </svg>
          <TitleText>QlikView x64 - [C:\Users\Paul Yeo\Dropbox\5 QV_Final\QV_SNP\QV4QS_v18.qvw*]</TitleText>
          <WindowButton type="button" aria-label="Minimize">
            <svg width="8" height="10"><rect y="6" width="8" height="2" fill="#1c2c2c" /></svg>
          </WindowButton>
          <WindowButton type="button" aria-label="Restore">
            <svg width="11" height="12" viewBox="0 0 11 12" fill="none" stroke="#1c2c2c">
              <path d="M2.500 2V.500h8v8H9" /><rect x=".500" y="3.500" width="7" height="6" /><path d="M0 4h8" strokeWidth="2" />
            </svg>
          </WindowButton>
          <WindowButton type="button" $close aria-label="Close">
            <svg width="9" height="8"><path d="M1 0l7 7M8 0L1 7" stroke="#fff" strokeWidth="2" /></svg>
          </WindowButton>
        </TitleBar>

        <ToolArea>
          <ToolRow>
            <Toolbar>
              <Grip />
              <ItemStrip items={STANDARD} />
              <Overflow type="button" aria-label="More"><OverflowArrow /></Overflow>
            </Toolbar>
            <Toolbar>
              <Grip />
              <ToolButton type="button" $text>
                <Icon name="clear" />Clear<svg width="9" height="4"><path d="M4 0h5L6.500 3z" /></svg>
              </ToolButton>
              <Divider />
              <ToolButton type="button" $text><Icon name="back" />Back</ToolButton>
              <ToolButton type="button" $text $off><Icon name="forward" />Forward</ToolButton>
              <Divider />
              <ToolButton type="button" $text><Icon name="lock" />Lock</ToolButton>
              <ToolButton type="button" $text><Icon name="unlock" />Unlock</ToolButton>
              <Overflow type="button" aria-label="More"><OverflowArrow /></Overflow>
            </Toolbar>
          </ToolRow>
          <MenuBar>
            <Grip />
            <MenuGroup>
              {MENUS.map((label) => (
                <MenuItem key={label} label={label} />
              ))}
            </MenuGroup>
            <ChildControls>
              <button type="button" aria-label="Minimize"><svg width="7" height="9"><rect y="7" width="7" height="2" /></svg></button>
              <button type="button" aria-label="Restore">
                <svg width="9" height="9" fill="none" stroke="#000"><path d="M2.500 3V.500h6v5H6M2 1.500h7" /><path d="M.500 3.500h6v5h-6zM0 4.500h7" /></svg>
              </button>
              <button type="button" aria-label="Close"><svg width="8" height="9"><path d="M1 1l6 6M7 1L1 7" stroke="#000" strokeWidth="2" /></svg></button>
            </ChildControls>
          </MenuBar>
          <ToolRow>
            <Toolbar>
              <Grip />
              <ItemStrip items={DESIGN} />
              <Overflow type="button" aria-label="More"><OverflowArrow /></Overflow>
            </Toolbar>
          </ToolRow>
        </ToolArea>

        <TabStrip>
          {TABS.map((tab, i) => (
            <Tab key={i} type="button" $w={tab.w} $pad={tab.pad} $active={tab.active}>
              {tab.label}
              {!tab.active && !tab.plain && <Dot />}
            </Tab>
          ))}
        </TabStrip>

        <SheetFrame>
          <Sheet>
            <SelectorLine>
              <PushButton type="button" $w={41} $tone="red">CYTD</PushButton>
              <BackButton type="button">BACK</BackButton>
              <SelectList w={134} gray on="SG" items={["AD", "ID", "KL", "PG", "SG", "TH"]} />
              <SelectList w={199} right rule items={["1", "2", "3", "4", "5", "6", "7", "8", "9", "10", "11", "12"]} />
              <SelectList w={281} rule items={["98", "97", "13", "12", "11", "10", "09", "08", "07", "06", "05", "04", "03", "02", "01", "99", "00"]} />
              <SelectList w={256} rule items={["G1", "G10", "G12", "G2", "G3", "G4", "G5", "G6", "G7", "G8", "G9"]} />
            </SelectorLine>

            <SelectorBlock>
              <ZoomGroup>
                {["Z 1.5", "Reset", "Z 0.7", "Z 0.5"].map((label) => (
                  <ZoomButton key={label} type="button">{label}</ZoomButton>
                ))}
              </ZoomGroup>
              <OrgColumn>
                <SelectList w={50} gray plain on="S$" items={["Org", "S$"]} />
                <PushButton type="button" $w={41} $tone="red">ART</PushButton>
              </OrgColumn>
              <ListStack>
                <ListRow>
                  <SelectList w={238} rule items={["BEC", "GEF", "HAK", "HEN", "HMS", "MIT", "OTH", "RED", "SCH"]} />
                  <SelectList w={331} gray on="Yr" items={["Date", "J Yr", "J_YrQ", "YMW", "Yr", "Yr HF", "Yr Mth", "Yr Qtr", "Yr Wk"]} />
                </ListRow>
                <ListRow $indent={3}>
                  <SelectList
                    w={526}
                    gray
                    pad={5}
                    on="SEG"
                    items={["SE_S", "SE_T", "SEG", "SOU", "BR_S", "BRA", "DES", "GP_C", "GP_T", "Mth", "ODSE", "P_ClS", "RE_S", "REG", "REG_", "Yr"]}
                  />
                  <SelectList w={137} gray on="sales" items={["cost", "Exp", "profit", "sales"]} />
                </ListRow>
                <ListRow $indent={4}>
                  <SelectList
                    w={665}
                    gray
                    on="sales"
                    items={["COGS", "COGS_Int", "cost", "Exp", "Exp_A", "Exp_S", "Exp_To", "Net Pro", "profit", "Rev", "Rev_Int", "sales", "Stock"]}
                  />
                </ListRow>
              </ListStack>
              <MinimizedChart type="button">
                <svg width="27" height="27" viewBox="0 0 27 27">
                  <path d="M0 14h7v12H0zM10 0h7v26h-7zM19 7h7v19h-7z" fill="#a4c8f4" stroke="#6888b0" strokeWidth=".8" />
                  <path d="M2 25l8-13 8 6 8-17" fill="none" stroke="#555" strokeWidth="4" />
                  <path d="M2 25l8-13 8 6 8-17" fill="none" stroke="#fff" strokeWidth="2.500" />
                </svg>
                cost
              </MinimizedChart>
            </SelectorBlock>

            <ButtonLine>
              <ButtonGroup $gap={3}>
                <PushButton type="button" $w={111}>TDS GROUP YR</PushButton>
                <PushButton type="button" $w={63}>TDS STK</PushButton>
              </ButtonGroup>
              <ButtonGroup $indent={44} $drop={3}>
                <PushButton type="button" $w={65}>ADL Trend</PushButton>
                <PushButton type="button" $w={132}>TDS Q3 Down</PushButton>
                <PushButton type="button" $w={70}>TDSS Qtr</PushButton>
              </ButtonGroup>
              <ButtonGroup $indent={25} $gap={6}>
                <PushButton type="button" $w={48}>2 Bar</PushButton>
                <PushButton type="button" $w={48}>9 Bar</PushButton>
                <PushButton type="button" $w={54}>16 Bar</PushButton>
              </ButtonGroup>
              <ButtonGroup $indent={3} $gap={3} $drop={2}>
                <PushButton type="button" $w={49}>40 Bar</PushButton>
                <PushButton type="button" $w={54}>100 Bar</PushButton>
                <PushButton type="button" $w={54}>500 Bar</PushButton>
                <PushButton type="button" $w={54}>1000 Bar</PushButton>
              </ButtonGroup>
            </ButtonLine>
            <ButtonTail>
              <PushButton type="button" $w={111} $tone="pink">CY Vs PY</PushButton>
            </ButtonTail>

            <ChartLine>
              <ChartPanel>
                <PanelCaption title=".sales" />
                <SalesChart />
              </ChartPanel>
              <TableClip>
                <YearTable>
                  <thead>
                    <tr><th>Y</th></tr>
                  </thead>
                  <tbody>
                    {SALES.slice(0, 14).map(([year]) => (
                      <tr key={year}><td>{year}</td></tr>
                    ))}
                  </tbody>
                </YearTable>
              </TableClip>
            </ChartLine>

            <LowerPanel>
              <PanelCaption title="Contribution in amount" />
              <ChartBody>
                <StackChart />
                <div>
                  <Legend />
                  <LegendScroll>
                    <ScrollKey type="button" aria-label="Up"><Chevron dir="up" size={10} color="#222" /></ScrollKey>
                    <ScrollKey type="button" aria-label="Down"><Chevron size={10} color="#222" /></ScrollKey>
                  </LegendScroll>
                </div>
              </ChartBody>
            </LowerPanel>
          </Sheet>
          <VScroll>
            <ArrowKey type="button" $h={17} aria-label="Scroll up"><Chevron dir="up" /></ArrowKey>
            <Thumb />
            <ArrowKey type="button" $h={28} $inset="10px 0 0" aria-label="Scroll down"><Chevron /></ArrowKey>
          </VScroll>
        </SheetFrame>
        <HScroll>
          <ArrowKey type="button" $w={17} aria-label="Scroll left"><Chevron dir="left" /></ArrowKey>
          <Thumb />
          <ArrowKey type="button" $w={43} $side="flex-end" $inset="0 4px 0 0" aria-label="Scroll right"><Chevron dir="right" /></ArrowKey>
          <ScrollCorner />
        </HScroll>

        <StatusBar>
          <StatusHelp>For Help, press F1</StatusHelp>
          <StatusCell $w={136}>27/7/2015 8:23:40 AM*</StatusCell>
          <StatusCell $w={34} />
          <StatusCell $w={160} />
          <StatusCell $w={160} />
          <StatusCell $w={22} $lamp><Dot /></StatusCell>
        </StatusBar>

        <Taskbar>
          {TASKS.map((task) => (
            <TaskButton key={task.name} type="button" aria-label={task.name} $open={task.open} $front={task.front} $hot={task.hot} $stack={task.stack}>
              <svg width="30" height="30" viewBox="0 0 32 32" fontFamily="Open Sans">{task.art}</svg>
            </TaskButton>
          ))}
          <Tray>
            <TrayIcons />
            <span>ENG</span>
            <Clock>
              1:57 PM
              <br />
              27/7/2015
            </Clock>
          </Tray>
        </Taskbar>
      </Desktop>
    </>
  );
}
